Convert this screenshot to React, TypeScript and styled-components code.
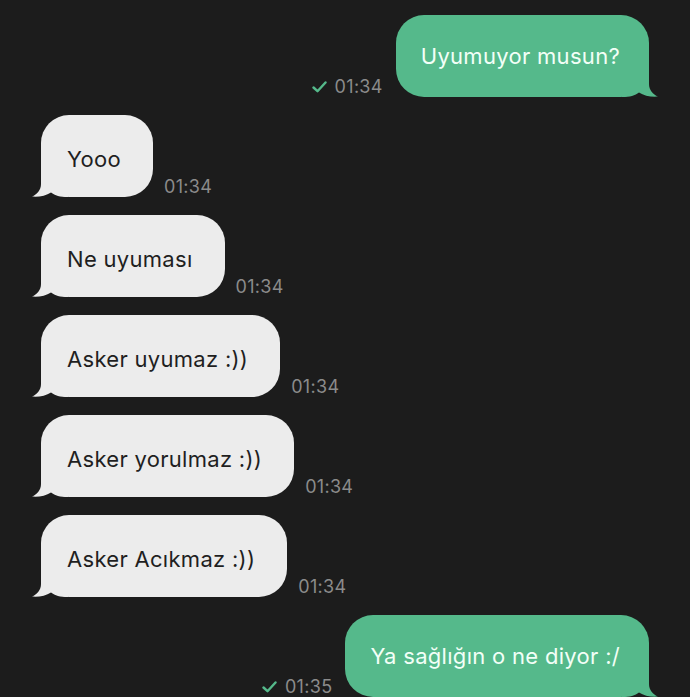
import styled, { createGlobalStyle } from "styled-components";

const GlobalStyle = createGlobalStyle`
  html, body {
    margin: 0;
    padding: 0;
    background: #1c1c1c;
    height: 697px;
    overflow: hidden;
  }
  body {
    font-family: Inter, "Liberation Sans", sans-serif;
  }
`;

const GREEN = "#55b98b";
const GREY = "#ececec";

const Thread = styled.div`
  display: flex;
  flex-direction: column;
  gap: 18px;
  padding: 15px 41px 0 41px;
`;

const Row = styled.div<{ $out: boolean }>`
  display: flex;
  flex-direction: ${(p) => (p.$out ? "row-reverse" : "row")};
  align-items: flex-end;
  gap: ${(p) => (p.$out ? "13px" : "11px")};
`;

const Bubble = styled.div<{ $out: boolean }>`
  position: relative;
  height: 82px;
  display: flex;
  align-items: center;
  padding: ${(p) => (p.$out ? "0 29px 0 25px" : "0 32px 0 26px")};
  border-radius: 28px;
  background: ${(p) => (p.$out ? GREEN : GREY)};
  color: ${(p) => (p.$out ? "#f2fff7" : "#1f1f1f")};
  font-size: 22px;
  letter-spacing: 0.3px;
  white-space: nowrap;
`;

const Label = styled.span<{ $out: boolean }>`
  position: relative;
  z-index: 1;
  margin-top: ${(p) => (p.$out ? "0" : "5px")};
`;

const Tail = styled.svg<{ $out: boolean }>`
  position: absolute;
  bottom: 0;
  width: 36px;
  height: 30px;
  ${(p) => (p.$out ? "right: -9px; transform: scaleX(-1);" : "left: -9px;")}
`;

const Time = styled.div`
  display: flex;
  align-items: center;
  gap: 8px;
  margin-bottom: 0;
  color: #8b8b8b;
  font-size: 18px;
  letter-spacing: 0.3px;
  line-height: 20px;
`;

const Check = () => (
  <svg width="15" height="12" viewBox="0 0 15 12">
    <path
      d="M1.5 6.5 L5.5 10.2 L13.5 1.5"
      fill="none"
      stroke={GREEN}
      strokeWidth="2.4"
      strokeLinecap="round"
      strokeLinejoin="round"
    />
  </svg>
);

interface Message {
  text: string;
  time: string;
  out: boolean;
}

const messages: Message[] = [
  { text: "Uyumuyor musun?", time: "01:34", out: true },
  { text: "Yooo", time: "01:34", out: false },
  { text: "Ne uyuması", time: "01:34", out: false },
  { text: "Asker uyumaz :))", time: "01:34", out: false },
  { text: "Asker yorulmaz :))", time: "01:34", out: false },
  { text: "Asker Acıkmaz :))", time: "01:34", out: false },
  { text: "Ya sağlığın o ne diyor :/", time: "01:35", out: true },
];

const MessageRow = ({ text, time, out }: Message) => (
  <Row $out={out}>
    <Bubble $out={out}>
      <Tail $out={out} viewBox="0 0 36 30">
        <path
          d="M9 0 L9 17 C9 23 5 27.5 0 29.6 C7 30.3 14 28.6 19 25.4 C23 28.6 28 30 36 30 L36 0 Z"
          fill={out ? GREEN : GREY}
        />
      </Tail>
      <Label $out={out}>{text}</Label>
    </Bubble>
    <Time>
      {out && <Check />}
      {time}
    </Time>
  </Row>
);

const App = () => (
  <>
    <GlobalStyle />
    <Thread>
      {messages.map((m, i) => (
        <MessageRow key={i} {...m} />
      ))}
    </Thread>
  </>
);

export default App;
